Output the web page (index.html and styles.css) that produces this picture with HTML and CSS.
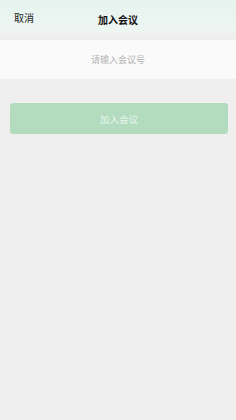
FILE: index.html
```html
<!DOCTYPE html>
<html lang="zh">
<head>
    <meta charset="UTF-8">
    <meta name="viewport" content="width=device-width, initial-scale=1.0">
    <title>加入会议</title>
    <link rel="stylesheet" href="styles.css">
</head>
<body>
    <div class="header">
        <span class="cancel">取消</span>
        <span class="title">加入会议</span>
    </div>
    <div class="input-row">
        <input type="text" class="meeting-id" placeholder="请输入会议号">
    </div>
    <div class="actions">
        <button class="join" disabled>加入会议</button>
    </div>
</body>
</html>
```

FILE: styles.css
```css
* {
    box-sizing: border-box;
}
body {
    margin: 0;
    min-height: 100vh;
    background: #efefef;
    font-family: "Noto Sans CJK SC", "Liberation Sans", sans-serif;
}
.header {
    position: relative;
    height: 33px;
    display: flex;
    align-items: center;
    justify-content: center;
    background: linear-gradient(180deg, #e6f4ef 0%, #eef5f2 100%);
}
.cancel {
    position: absolute;
    left: 14px;
    top: 11px;
    font-size: 10px;
    line-height: 14px;
    color: #222;
}
.title {
    font-size: 10px;
    font-weight: bold;
    color: #111;
    margin-top: 5px;
}
.input-row {
    margin-top: 7px;
    height: 39px;
    background: #fafafa;
    display: flex;
    align-items: center;
}
.meeting-id {
    width: 100%;
    border: none;
    background: transparent;
    text-align: center;
    font-family: inherit;
    font-size: 9px;
    color: #333;
    outline: none;
    padding: 0;
}
.meeting-id::placeholder {
    color: #b4b4b4;
}
.actions {
    padding: 24px 8px 0 10px;
}
.join {
    width: 100%;
    height: 31px;
    border: none;
    border-radius: 3px;
    background: #b3dcbf;
    color: #e8f5ec;
    font-family: inherit;
    font-size: 9.5px;
    padding: 0;
}
```
